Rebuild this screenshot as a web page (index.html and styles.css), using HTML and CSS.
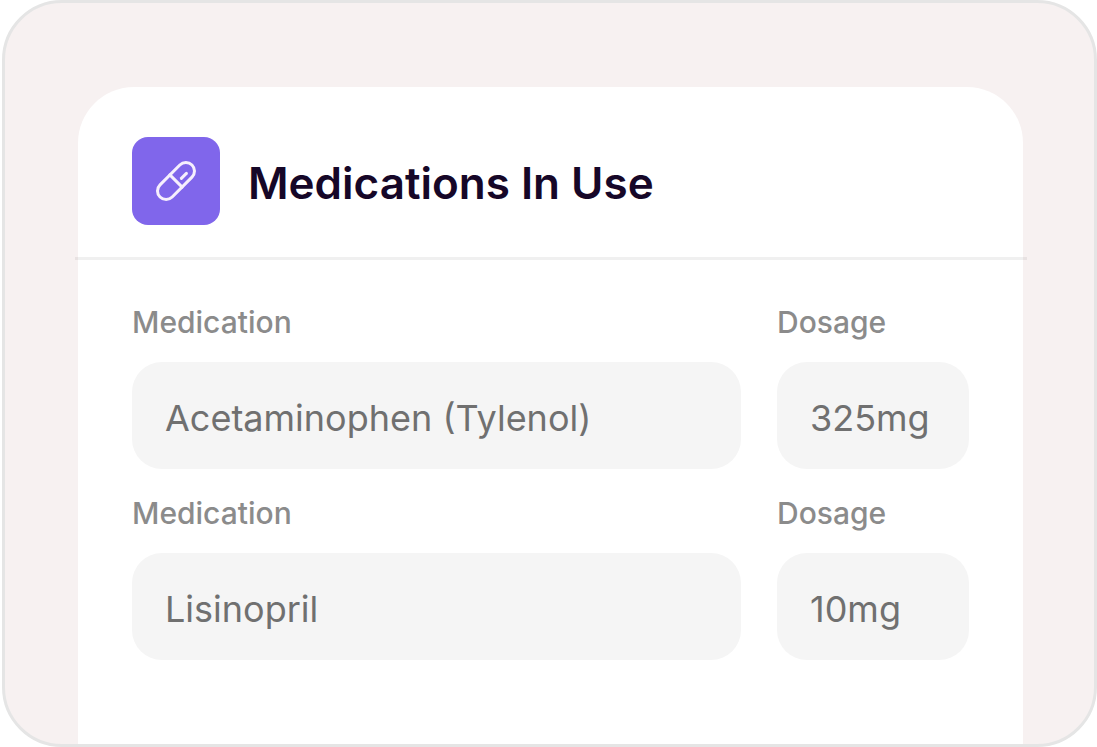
FILE: index.html
```
<!DOCTYPE html>
<html lang="en">
<head>
    <meta charset="UTF-8">
    <meta name="viewport" content="width=device-width, initial-scale=1.0">
    <title>Medications In Use</title>
    <link rel="stylesheet" href="styles.css">
</head>
<body>
    <main class="panel">
        <section class="card">
            <header class="card-header">
                <span class="icon-tile">
                    <svg width="44" height="44" viewBox="0 0 44 44" fill="none" stroke="currentColor" stroke-width="3" stroke-linecap="round" aria-hidden="true">
                        <rect x="-0.6" y="13.4" width="45.2" height="17.2" rx="8.6" transform="rotate(-45 22 22)"/>
                        <path d="M15.9 15.9L28.1 28.1"/>
                        <path d="M27.4 19.4L32.4 14.4"/>
                    </svg>
                </span>
                <h1>Medications In Use</h1>
            </header>

            <form class="medications">
                <div class="form-group">
                    <label for="medication-1">Medication</label>
                    <input type="text" id="medication-1" value="Acetaminophen (Tylenol)">
                </div>
                <div class="form-group">
                    <label for="dosage-1">Dosage</label>
                    <input type="text" id="dosage-1" value="325mg">
                </div>
                <div class="form-group">
                    <label for="medication-2">Medication</label>
                    <input type="text" id="medication-2" value="Lisinopril">
                </div>
                <div class="form-group">
                    <label for="dosage-2">Dosage</label>
                    <input type="text" id="dosage-2" value="10mg">
                </div>
            </form>
        </section>
    </main>
</body>
</html>
```
FILE: styles.css
```
* {
    box-sizing: border-box;
}
body {
    margin: 0;
    padding-left: 2px;
    background-color: #fff;
    font-family: Inter, "Liberation Sans", sans-serif;
}
.panel {
    display: flex;
    min-height: 100vh;
    padding: 84px 71px 0 73px;
    background-color: #f7f1f1;
    border: 3px solid #e5e5e5;
    border-radius: 60px;
}
.card {
    flex: 1;
    min-width: 0;
    background-color: #fff;
    border-radius: 56px 56px 0 0;
}
/* the divider runs slightly past both sides of the card */
.card-header {
    display: flex;
    align-items: center;
    gap: 28px;
    margin: 0 -4px 0 -3px;
    padding: 50px 58px 32px 57px;
    border-bottom: 3px solid rgba(0, 0, 0, 0.06);
}
.icon-tile {
    display: flex;
    flex: none;
    align-items: center;
    justify-content: center;
    width: 88px;
    height: 88px;
    color: #f6effd;
    background-color: #8066eb;
    border-radius: 16px;
}
h1 {
    margin: 0;
    padding-top: 4px;
    color: #160728;
    font-size: 44px;
    font-weight: 600;
    line-height: 56px;
}
.medications {
    display: grid;
    grid-template-columns: 1fr 192px;
    gap: 24px 36px;
    padding: 42px 54px 84px;
}
.form-group {
    min-width: 0;
}
label {
    display: block;
    margin-bottom: 20px;
    color: #8b8b8b;
    font-size: 30px;
    font-weight: 500;
    line-height: 40px;
}
input {
    display: block;
    width: 100%;
    height: 107px;
    padding: 4px 33px 0;
    border: none;
    border-radius: 30px;
    color: #707070;
    background-color: #f5f5f5;
    font-family: inherit;
    font-size: 36px;
}
```
